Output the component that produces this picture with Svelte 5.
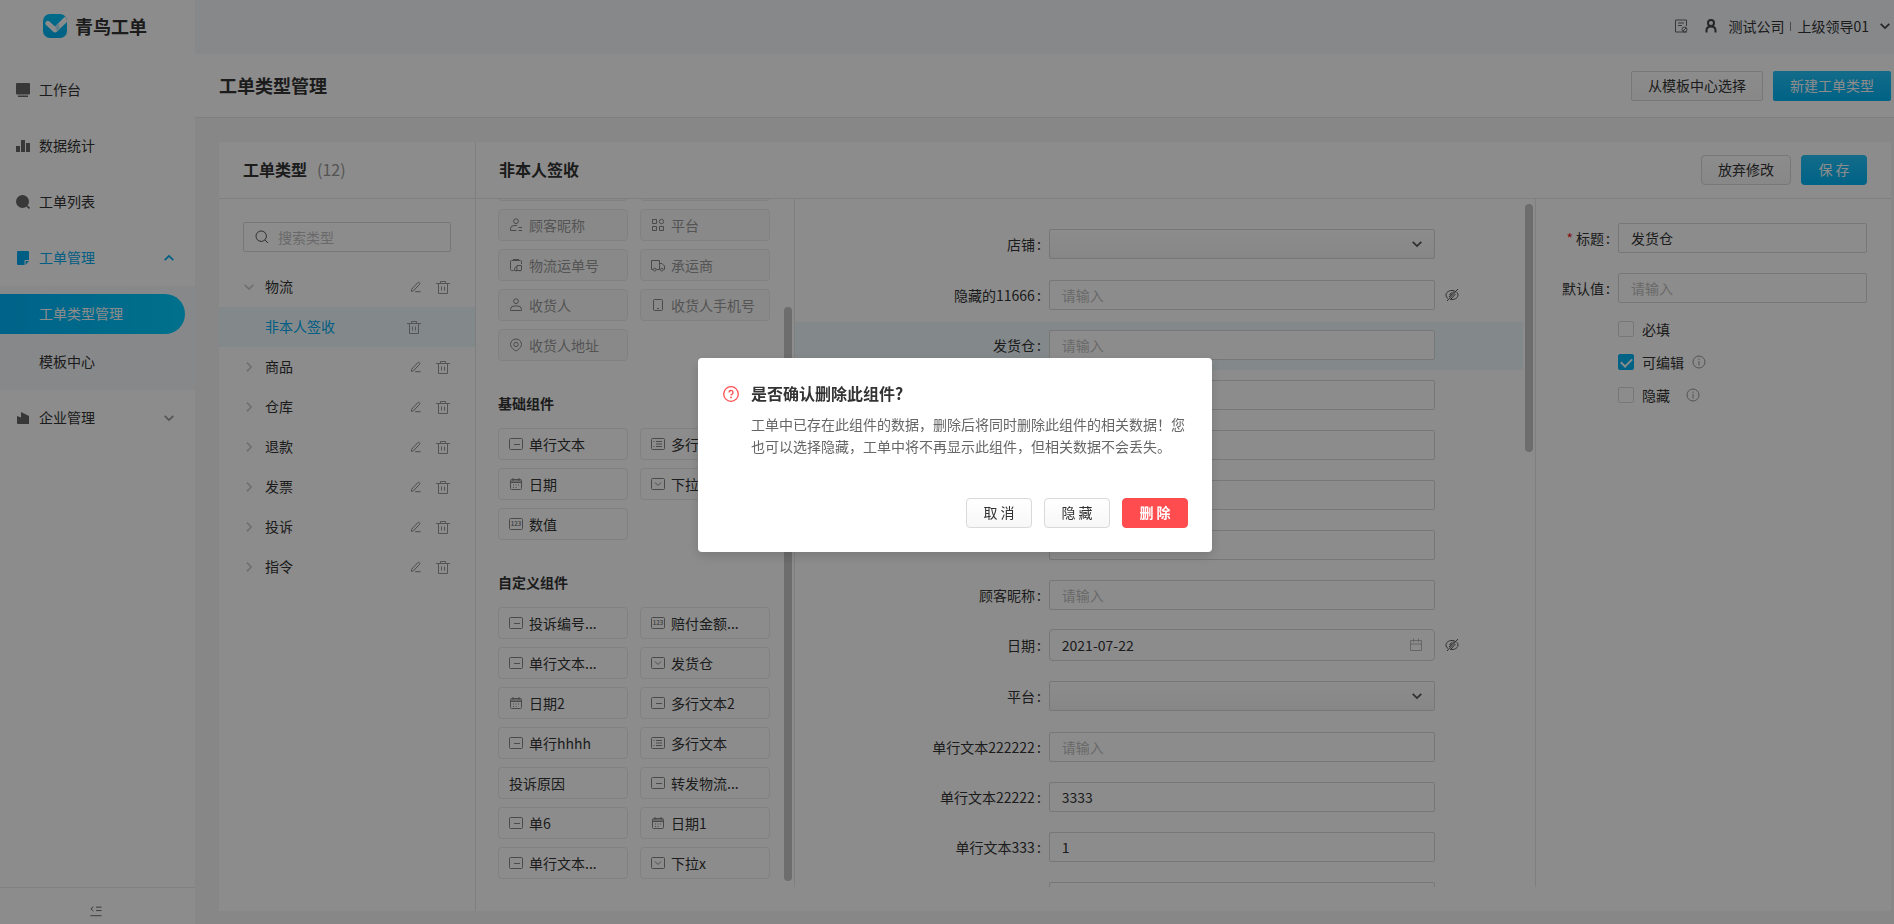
<script>
	const menu = [
		{ label: '工作台', icon: 'desk' },
		{ label: '数据统计', icon: 'bars' },
		{ label: '工单列表', icon: 'lens' },
		{
			label: '工单管理', icon: 'note', open: true,
			children: [{ label: '工单类型管理', active: true }, { label: '模板中心' }]
		},
		{ label: '企业管理', icon: 'company', arrow: true }
	];

	const tree = [
		{ name: '物流', open: true },
		{ name: '非本人签收', leaf: true },
		{ name: '商品' },
		{ name: '仓库' },
		{ name: '退款' },
		{ name: '发票' },
		{ name: '投诉' },
		{ name: '指令' }
	];

	const palette = [
		{
			disabled: true,
			items: [
				[''], [''],
				['顾客昵称', 'nick'], ['平台', 'grid'],
				['物流运单号', 'waybill'], ['承运商', 'truck'],
				['收货人', 'person'], ['收货人手机号', 'phone'],
				['收货人地址', 'pin']
			]
		},
		{
			title: '基础组件',
			items: [['单行文本', 'line'], ['多行文本', 'lines'], ['日期', 'date'], ['下拉', 'drop'], ['数值', 'num']]
		},
		{
			title: '自定义组件',
			items: [
				['投诉编号...', 'line'], ['赔付金额...', 'num'],
				['单行文本...', 'line'], ['发货仓', 'drop'],
				['日期2', 'date'], ['多行文本2', 'line'],
				['单行hhhh', 'line'], ['多行文本', 'lines'],
				['投诉原因'], ['转发物流...', 'line'],
				['单6', 'line'], ['日期1', 'date'],
				['单行文本...', 'line'], ['下拉x', 'drop']
			]
		}
	];

	let fields = $state([
		{ label: '店铺', type: 'select', value: '' },
		{ label: '隐藏的11666', type: 'text', value: '', hint: '请输入', hidden: true },
		{ label: '发货仓', type: 'text', value: '', hint: '请输入', active: true },
		{ label: '', type: 'text', value: '' },
		{ label: '', type: 'text', value: '' },
		{ label: '', type: 'text', value: '' },
		{ label: '', type: 'text', value: '' },
		{ label: '顾客昵称', type: 'text', value: '', hint: '请输入' },
		{ label: '日期', type: 'date', value: '2021-07-22', hidden: true },
		{ label: '平台', type: 'select', value: '' },
		{ label: '单行文本222222', type: 'text', value: '', hint: '请输入' },
		{ label: '单行文本22222', type: 'text', value: '3333' },
		{ label: '单行文本333', type: 'text', value: '1' },
		{ label: '', type: 'text', value: '' }
	]);

	let title = $state('发货仓');
	let options = $state([
		{ label: '必填', checked: false },
		{ label: '可编辑', checked: true, info: true },
		{ label: '隐藏', checked: false, info: true, wide: true }
	]);
	let confirming = $state(true);

	// stroke icons on a 14 unit grid
	const strokes = {
		line: 'M1.5 1.5h11a1 1 0 0 1 1 1v9a1 1 0 0 1-1 1h-11a1 1 0 0 1-1-1v-9a1 1 0 0 1 1-1zM5 7.5h6',
		lines: 'M1.5 1.5h11a1 1 0 0 1 1 1v9a1 1 0 0 1-1 1h-11a1 1 0 0 1-1-1v-9a1 1 0 0 1 1-1zM5 4.5h6M5 7h6M5 9.500h6M2.500 4.500h1M2.500 9.500h1',
		drop: 'M1.5 1.5h11a1 1 0 0 1 1 1v9a1 1 0 0 1-1 1h-11a1 1 0 0 1-1-1v-9a1 1 0 0 1 1-1zM4 5.500l3 3 3-3',
		num: 'M1.5 1.5h11a1 1 0 0 1 1 1v9a1 1 0 0 1-1 1h-11a1 1 0 0 1-1-1v-9a1 1 0 0 1 1-1z',
		date: 'M2.5 2.5h9a1 1 0 0 1 1 1v8a1 1 0 0 1-1 1h-9a1 1 0 0 1-1-1v-8a1 1 0 0 1 1-1zM1.5 5.5h11M4 1v3M10 1v3M2 4h10M4 8h1M6.5 8h1M9 8h1M4 10.5h1M6.5 10.5h1',
		nick: 'M7 .8a2.4 2.4 0 1 1 0 4.800 2.400 2.400 0 0 1 0-4.800zM8 7.500H5A3.500 3.500 0 0 0 1.500 11v1.500h6M9.500 9.500H13M9.500 12.500H13',
		person: 'M7 .8a2.4 2.4 0 1 1 0 4.800 2.400 2.400 0 0 1 0-4.800zM5 8h4a3.500 3.500 0 0 1 3.500 3.500v1h-11v-1A3.500 3.500 0 0 1 5 8z',
		grid: 'M1.5 1.500h4v4h-4zM1.500 8.500h4v4h-4zM8.500 8.500h4v4h-4zM10.500 1.300a2.200 2.200 0 1 1 0 4.400 2.200 2.200 0 0 1 0-4.400z',
		waybill: 'M4.5 12.500h-2a1 1 0 0 1-1-1v-8a1 1 0 0 1 1-1h9a1 1 0 0 1 1 1V6M4 1.500h6M8 12V7.500h4.500V12M8 9H6.500L5.500 11v1.500h7M7 12.500v1M11 12.500v1',
		truck: 'M2 11.5H.5v-9h8v9H5.5M8.5 5.5H11L13.5 8v3.5h-1M8.5 11.500H9M3.800 10.200a1.400 1.400 0 1 1 0 2.800 1.400 1.400 0 0 1 0-2.800zM10.800 10.200a1.400 1.400 0 1 1 0 2.800 1.400 1.400 0 0 1 0-2.800z',
		phone: 'M3.5 1.5h7a1 1 0 0 1 1 1v9a1 1 0 0 1-1 1h-7a1 1 0 0 1-1-1v-9a1 1 0 0 1 1-1zM6 10.5h2',
		pin: 'M7 1a5.5 5.5 0 0 1 5.5 5.5C12.5 9.5 9 12 7 13 5 12 1.5 9.5 1.5 6.5A5.5 5.5 0 0 1 7 1zM7 4.3a2.200 2.200 0 1 1 0 4.400 2.200 2.200 0 0 1 0-4.400z',
		search: 'M6.2 1a5.2 5.2 0 1 1 0 10.400 5.200 5.200 0 0 1 0-10.400zM10 10l3 3',
		pencil: 'M2 9.5L9 2a1.4 1.4 0 0 1 2 2l-7 7.5-2.5.5zM6 12.5h6.5',
		trash: 'M0 3.5h14M4.5 3V1.500h5V3M2.500 3.500v10h9v-10M5.500 6.500v4M8.500 6.500v4',
		down: 'M2 4.5L7 9.500l5-5',
		up: 'M2 9.5l5-5 5 5',
		right: 'M4.5 2L9.500 7l-5 5',
		calendar: 'M1.5 2.5h11v10h-11zM1.5 6h11M4.500.500V4M9.500.500V4',
		info: 'M7 1a6 6 0 1 1 0 12A6 6 0 0 1 7 1zM7 6v4.500M7 3.500V5',
		eyeoff: 'M11 3.800C9.900 2.900 8.500 2.500 7 2.500 3.500 2.500 1 4.600 1 7c0 1.500.8 2.700 2 3.500M5 11.200c.6.200 1.300.3 2 .3 3.500 0 6-2.100 6-4.500 0-1.100-.4-2-1.200-2.800M13 1L2 13M9 3.500L4 9M10.500 6L6 11M6.500 4.500L4.500 7',
		user: 'M7 1a3 3 0 1 1 0 6 3 3 0 0 1 0-6zM2.500 13.500v-2C2.500 9 4.500 7.500 7 7.500s4.500 1.500 4.500 4v2',
		doc: 'M7 13H1.500V1h11v6M4 4h6M4 6.500h4M10.500 8a2.500 2.500 0 1 1 0 5 2.500 2.500 0 0 1 0-5zM9 12l3-3M7 13h6',
		fold: 'M7 2.5h6.5M7 6.500h6.500M.500 12.500h13M4 2L1 4.500 4 7'
	};

	const fills = {
		desk: 'M1 0h12a1 1 0 0 1 1 1v9.5a1 1 0 0 1-1 1H1a1 1 0 0 1-1-1V1a1 1 0 0 1 1-1zM2 12.5h10V14H2z',
		bars: 'M0 7h4v6H0zM5 1h4v12H5zM10 4h4v9h-4z',
		lens: 'M6.5 0a6.5 6.5 0 1 1 0 13 6.5 6.5 0 0 1 0-13zM10.5 11.8l1.2-1.2 2.300 2.200-1 1.200z',
		note: 'M2 0h10a1 1 0 0 1 1 1v8H9.5a1 1 0 0 0-1 1v4H2a1 1 0 0 1-1-1V1a1 1 0 0 1 1-1zM9.5 10H13l-3.500 4z',
		company: 'M1 5l4 1.5V1l8 4v8H2a1 1 0 0 1-1-1z'
	};
</script>

{#snippet icon(name, size = 14, weight = 1)}
	<svg class="icon" width={size} height={size} viewBox="0 0 14 14" aria-hidden="true">
		{#if fills[name]}
			<path d={fills[name]} fill="currentColor" />
		{:else}
			<path d={strokes[name]} fill="none" stroke="currentColor" stroke-width={weight} />
		{/if}
		{#if name === 'num'}
			<text x="7" y="9" font-size="6" font-weight="700" text-anchor="middle" fill="currentColor">123</text>
		{/if}
	</svg>
{/snippet}

<div class="app">
	<aside class="sidebar">
		<div class="logo">
			<svg width="24" height="24" viewBox="0 0 24 24" aria-hidden="true">
				<defs>
					<linearGradient id="logo-bg" x1="0" y1="0" x2="0" y2="1">
						<stop offset="0" stop-color="#00c4fa" />
						<stop offset="1" stop-color="#00b0f0" />
					</linearGradient>
				</defs>
				<rect width="24" height="24" rx="7" fill="url(#logo-bg)" />
				<path d="M2.500 8.500c1-1.800 2.500-2.300 4-1l5.500 5L22 2.500C23.500 4 24 6 24 8L14 17.500c-1.300 1.200-2.700 1.200-4 0L3 11c-.8-.8-1-1.600-.5-2.500z" fill="#fff" />
				<path d="M12 12.500l3.500-3.500 1.500 5.700-3 2.800z" fill="#b5eafc" />
			</svg>
			<strong>青鸟工单</strong>
		</div>

		<nav class="menu">
			{#each menu as item}
				<a class="menu-item" class:open={item.open} href="#{item.icon}">
					{@render icon(item.icon)}
					<span class="grow">{item.label}</span>
					{#if item.open}<span class="arrow">{@render icon('up', 12, 2)}</span>{/if}
					{#if item.arrow}<span class="arrow">{@render icon('down', 12, 2)}</span>{/if}
				</a>
				{#if item.children}
					<div class="submenu">
						{#each item.children as child}
							<a class="sub-item" class:active={child.active} href="#sub">{child.label}</a>
						{/each}
					</div>
				{/if}
			{/each}
		</nav>

		<button class="fold" aria-label="收起菜单">{@render icon('fold', 12)}</button>
	</aside>

	<div class="main">
		<header class="topbar">
			{@render icon('doc')}
			{@render icon('user', 14, 2)}
			<span class="account">测试公司<i></i>上级领导01</span>
			{@render icon('down', 12, 2)}
		</header>

		<div class="page-head">
			<h1>工单类型管理</h1>
			<button class="btn square">从模板中心选择</button>
			<button class="btn square primary">新建工单类型</button>
		</div>

		<div class="content">
			<section class="types">
				<h2 class="bar">工单类型<span class="count">(12)</span></h2>
				<label class="search">
					{@render icon('search')}
					<input type="text" placeholder="搜索类型" aria-label="搜索类型" />
				</label>
				<ul class="tree">
					{#each tree as node}
						<li class:leaf={node.leaf}>
							{#if !node.leaf}
								<span class="caret">{@render icon(node.open ? 'down' : 'right', 12, 2)}</span>
							{/if}
							<span class="grow">{node.name}</span>
							{#if !node.leaf}
								<button class="tool" aria-label="编辑">{@render icon('pencil', 12)}</button>
							{/if}
							<button class="tool light" aria-label="删除">{@render icon('trash')}</button>
						</li>
					{/each}
				</ul>
			</section>

			<section class="editor">
				<div class="bar">
					<h2 class="grow">非本人签收</h2>
					<button class="btn">放弃修改</button>
					<button class="btn primary">保 存</button>
				</div>

				<div class="columns">
					<div class="palette">
						{#each palette as group}
							{#if group.title}<h3>{group.title}</h3>{/if}
							<div class="chips">
								{#each group.items as [label, kind]}
									<button class="chip" disabled={group.disabled}>
										{#if kind}{@render icon(kind)}{/if}
										{label}
									</button>
								{/each}
							</div>
						{/each}
						<div class="thumb low"></div>
					</div>

					<div class="preview">
						<div class="fields">
							{#each fields as f, i}
								<div class="field" class:active={f.active} class:tall={f.type !== 'text'}>
									<label for="f{i}">{#if f.label}{f.label}<b>:</b>{/if}</label>
									<div class="control">
										{#if f.type === 'select'}
											<select id="f{i}" bind:value={f.value}><option value=""></option></select>
											<span class="suffix">{@render icon('down', 12, 2)}</span>
										{:else}
											<input id="f{i}" type="text" class:date={f.type === 'date'} placeholder={f.hint} bind:value={f.value} />
											{#if f.type === 'date'}<span class="suffix pale">{@render icon('calendar')}</span>{/if}
										{/if}
									</div>
									{#if f.hidden}<span class="eye">{@render icon('eyeoff')}</span>{/if}
								</div>
							{/each}
						</div>
						<div class="thumb high"></div>
					</div>

					<form class="props">
						<div class="prop">
							<label for="p-title"><em>*</em> 标题<b>:</b></label>
							<input id="p-title" type="text" bind:value={title} />
						</div>
						<div class="prop">
							<label for="p-default">默认值<b>:</b></label>
							<input id="p-default" type="text" placeholder="请输入" />
						</div>
						<div class="checks">
							{#each options as o}
								<div class="check">
									<label><input type="checkbox" bind:checked={o.checked} />{o.label}</label>
									{#if o.info}<span class="info" class:wide={o.wide}>{@render icon('info')}</span>{/if}
								</div>
							{/each}
						</div>
					</form>
				</div>
			</section>
		</div>
	</div>
</div>

{#if confirming}
	<div class="mask">
		<div class="modal" role="dialog" aria-modal="true" aria-labelledby="modal-title">
			<svg class="ask" width="16" height="16" viewBox="0 0 16 16" aria-hidden="true">
				<circle cx="8" cy="8" r="7.3" fill="none" stroke="currentColor" stroke-width="1.3" />
				<path d="M6 6.500a2 2 0 1 1 2.800 1.800c-.6.300-.8.600-.8 1.200" fill="none" stroke="currentColor" stroke-width="1.3" />
				<circle cx="8" cy="11.4" r=".9" fill="currentColor" />
			</svg>
			<div class="modal-text">
				<h2 id="modal-title">是否确认删除此组件?</h2>
				<p>工单中已存在此组件的数据，删除后将同时删除此组件的相关数据！您也可以选择隐藏，工单中将不再显示此组件，但相关数据不会丢失。</p>
			</div>
			<div class="modal-foot">
				<button class="btn" onclick={() => confirming = false}>取 消</button>
				<button class="btn">隐 藏</button>
				<button class="btn danger">删 除</button>
			</div>
		</div>
	</div>
{/if}

<style>
	:global(body) {
		margin: 0;
		overflow: hidden;
		font-family: "Noto Sans CJK SC", "Noto Sans", sans-serif;
		font-size: 14px;
		line-height: 22px;
		color: #333;
	}
	* { box-sizing: border-box; }
	button, input, select { font: inherit; color: inherit; margin: 0; }
	button { cursor: pointer; }
	h1, h2, h3, p, ul { margin: 0; padding: 0; }
	a { color: inherit; text-decoration: none; }
	.icon { display: block; flex: none; }
	.grow { flex: 1; }

	.app { display: flex; height: 100vh; }
	.sidebar {
		width: 195px; flex: none;
		display: flex; flex-direction: column;
		background: #fff;
	}
	.logo {
		display: flex; align-items: center; gap: 8px;
		height: 54px; padding: 0 43px 2px;
	}
	.logo strong { font-size: 18px; font-weight: 700; line-height: 24px; white-space: nowrap; }
	.menu { flex: 1; padding-top: 8px; }
	.menu-item {
		display: flex; align-items: center; gap: 9px;
		height: 56px; padding: 0 20px 0 16px;
		line-height: 20px;
	}
	.menu-item .grow { padding-bottom: 2px; }
	.menu-item.open { color: #00acf0; }
	.menu-item > .icon { color: #666; }
	.menu-item.open > .icon { color: inherit; }
	.arrow { color: #999; }
	.open .arrow { color: inherit; }
	.submenu {
		display: flex; flex-direction: column; gap: 8px;
		padding: 8px 10px 8px 0;
		background: #f5f8fc;
	}
	.sub-item { height: 40px; line-height: 38px; padding-left: 39px; border-radius: 0 20px 20px 0; }
	.sub-item.active { color: #fff; background: linear-gradient(90deg, #00b4fa, #00cdff); }
	.fold {
		display: flex; align-items: center; justify-content: center;
		height: 37px; padding: 10px 4px 0 0;
		border: none; border-top: 1px solid #ebebeb; background: none;
		color: #555;
	}

	.main {
		flex: 1; min-width: 0;
		display: flex; flex-direction: column;
		background: #f6f6f6;
	}
	.topbar {
		display: flex; align-items: center; justify-content: flex-end; gap: 10px;
		height: 54px; padding: 0 3px 2px 0;
		background: #f5f8fc;
	}
	.topbar > .icon { color: #444; }
	.topbar > .icon:first-child { margin-right: 6px; color: #666; }
	.account { display: flex; align-items: center; }
	.account i { width: 1px; height: 9px; margin: 0 6px; background: #888; }
	.page-head {
		display: flex; align-items: center; gap: 10px;
		height: 64px; padding: 0 3px 0 24px;
		background: #fff; border-bottom: 1px solid #e8e8e8;
	}
	.page-head h1 { flex: 1; padding-bottom: 2px; font-size: 18px; font-weight: 700; }

	.btn {
		height: 30px; min-width: 66px; padding: 0 16px 2px;
		border: 1px solid #d9d9d9; border-radius: 4px;
		background: linear-gradient(#fff, #f7f7f7);
		line-height: 26px; white-space: nowrap;
	}
	.btn.square { border-radius: 2px; }
	.btn.primary { border-color: transparent; color: #fff; background: linear-gradient(#24c4fa, #00b4f5) border-box; }
	.btn.danger { border-color: #ff4d4f; color: #fff; background: #ff4d4f; font-weight: 700; }

	.content {
		flex: 1; min-height: 0;
		display: flex;
		margin: 24px 3px 13px 24px;
		background: #fff;
	}
	.bar {
		display: flex; align-items: center; gap: 10px;
		height: 57px; padding: 0 24px 2px;
		border-bottom: 1px solid #e8e8e8;
	}
	h2 { font-size: 16px; font-weight: 700; }
	.count { color: #999; font-weight: 400; }

	.types { width: 257px; flex: none; border-right: 1px solid #e8e8e8; }
	.search {
		display: flex; align-items: center; gap: 9px;
		height: 30px; margin: 23px 24px 15px; padding: 0 11px;
		border: 1px solid #d9d9d9; border-radius: 2px;
		color: #555;
	}
	.search input { flex: 1; min-width: 0; padding: 0; border: none; outline: none; background: none; }
	.tree { list-style: none; }
	.tree li { display: flex; align-items: center; height: 40px; padding: 0 25px 0 24px; }
	.tree .grow { padding-bottom: 2px; }
	.tree li.leaf { padding: 0 54px 0 46px; color: #00acf0; background: #eef8fd; }
	.caret { width: 22px; color: #ccc; }
	.tool { padding: 0; border: none; background: none; color: #777; }
	.tool.light { margin-left: 14px; color: #999; }

	.editor { flex: 1; min-width: 0; display: flex; flex-direction: column; }
	.editor .bar { flex: none; padding: 0 24px 0 23px; }
	.editor h2 { padding-bottom: 2px; }
	.columns { flex: 1; min-height: 0; display: flex; margin-bottom: 24px; }
	.palette {
		position: relative;
		width: 319px; flex: none;
		display: flex; flex-direction: column; justify-content: flex-end;
		padding: 0 24px 8px 22px;
		border-right: 1px solid #e8e8e8;
		overflow: hidden;
	}
	.palette h3 { margin: 31px 0 14px; font-size: 14px; font-weight: 700; line-height: 22px; }
	.chips { display: grid; grid-template-columns: 130px 130px; gap: 8px 12px; }
	.chip {
		display: flex; align-items: center; gap: 6px;
		height: 32px; padding: 0 10px;
		border: 1px solid #ebebeb; border-radius: 4px;
		background: none; line-height: 22px; white-space: nowrap;
	}
	.chip .icon { color: #888; }
	.chip:disabled { color: #999; background: #fafafa; cursor: default; }
	.thumb { position: absolute; right: 2px; width: 8px; border-radius: 4px; background: #c6c6c6; }
	.thumb.low { bottom: 6px; height: calc(83% + 3px); }
	.thumb.high { top: 5px; height: 36%; }

	.preview { position: relative; flex: 1; min-width: 0; padding: 22px 12px 0 0; overflow: hidden; }
	.fields { display: flex; flex-direction: column; gap: 2px; }
	.field { display: flex; align-items: center; height: 48px; padding-bottom: 2px; }
	.field.tall { height: 49px; padding-bottom: 3px; }
	.field.active { background: #eef8fd; }
	.field label { width: calc(35% - 1px); padding-right: 8px; text-align: right; }
	label b { margin-left: 2px; font-weight: 400; }
	.control { position: relative; width: 53%; }
	.control input, .control select, .prop input {
		display: block;
		width: 100%; height: 30px; padding: 0 12px;
		border: 1px solid #d9d9d9; border-radius: 2px;
		background: #fff; outline: none;
	}
	.control select { appearance: none; background: linear-gradient(#fff, #f5f5f5); }
	.control input.date { height: 32px; border-radius: 4px; }
	input::placeholder { color: #bfbfbf; opacity: 1; }
	.suffix {
		position: absolute; top: 0; bottom: 0; right: 12px;
		display: flex; align-items: center;
		color: #555; pointer-events: none;
	}
	.suffix.pale { color: #bbb; }
	.eye { margin-left: 10px; color: #555; }

	.props {
		width: 356px; flex: none;
		padding: 24px 24px 0;
		border-left: 1px solid #e8e8e8;
	}
	.prop { display: flex; align-items: center; margin-bottom: 20px; }
	.prop label { width: 58px; flex: none; padding-right: 8px; text-align: right; white-space: nowrap; }
	em { color: #f5222d; font-style: normal; }
	.checks { display: flex; flex-direction: column; gap: 11px; margin-top: -5px; padding-left: 58px; }
	.check { display: flex; align-items: center; }
	.check label { display: flex; align-items: center; gap: 8px; }
	.check input {
		appearance: none;
		width: 16px; height: 16px;
		border: 1px solid #d9d9d9; border-radius: 2px;
		display: grid; place-items: center;
	}
	.check input:checked { border-color: #00b4f5; background: #00b4f5; }
	.check input:checked::after {
		content: ''; width: 9px; height: 5px;
		border: solid #fff; border-width: 0 0 2px 2px;
		transform: translateY(-1px) rotate(-45deg);
	}
	.info { margin-left: 8px; color: #999; }
	.info.wide { margin-left: 16px; }

	.mask {
		position: fixed; inset: 0;
		display: flex; align-items: center; justify-content: center;
		padding: 0 0 14px 16px;
		background: rgba(0, 0, 0, 0.45);
	}
	.modal {
		display: flex; flex-wrap: wrap; align-items: flex-start; gap: 0 12px;
		width: 514px; padding: 24px 24px 24px 25px;
		border-radius: 4px; background: #fff;
		box-shadow: 0 4px 12px rgba(0, 0, 0, 0.15);
	}
	.ask { flex: none; margin-top: 4px; color: #ff4d4f; }
	.modal-text { flex: 1; }
	.modal-text h2 { line-height: 22px; }
	.modal-text p { margin-top: 9px; color: #666; }
	.modal-foot { display: flex; justify-content: flex-end; gap: 12px; width: 100%; margin-top: 41px; }
</style>
